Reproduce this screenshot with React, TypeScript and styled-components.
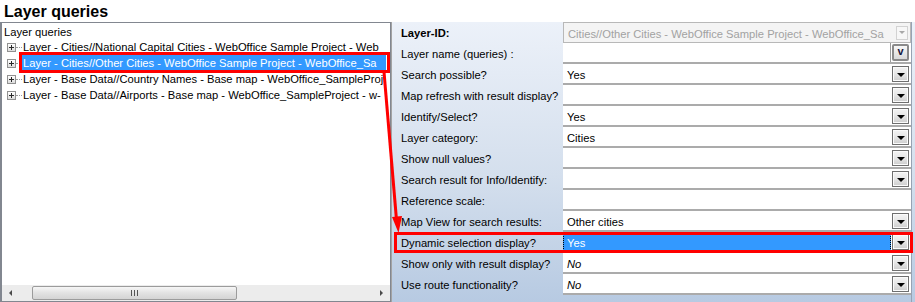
import React from 'react';
import styled, { createGlobalStyle, css } from 'styled-components';

const Global = createGlobalStyle`
  html, body { margin: 0; padding: 0; background: #fff; }
  body { font-family: "Liberation Sans", Arial, sans-serif; }
`;

const Frame = styled.div`
  position: relative;
  width: 915px;
  height: 302px;
  overflow: hidden;
  background: #fff;
  display: flex;
  flex-direction: column;
  font-family: "Liberation Sans", Arial, sans-serif;
  font-size: 11.2px;
  color: #000;
`;

const Title = styled.h1`
  margin: 0;
  height: 22px;
  flex: none;
  padding: 1px 0 0 4px;
  box-sizing: border-box;
  font-size: 16px;
  font-weight: bold;
  line-height: 21px;
`;

const Body = styled.div`
  flex: 1;
  display: flex;
  min-height: 0;
`;

const LeftPanel = styled.div`
  width: 391px;
  flex: none;
  box-sizing: border-box;
  border: 1px solid #828790;
  border-left-width: 2px;
  display: flex;
  flex-direction: column;
  background: #fff;
`;

const Tree = styled.div`
  flex: 1;
  overflow: hidden;
`;

const TreeRoot = styled.div`
  height: 16px;
  line-height: 16px;
  padding: 1px 0 0 2px;
  box-sizing: border-box;
  white-space: nowrap;
`;

const TreeRow = styled.div<{ $hl?: boolean }>`
  position: relative;
  height: 16px;
  display: flex;
  align-items: center;
  padding-left: 5px;
  ${p => p.$hl && css`
    &::after {
      content: '';
      position: absolute;
      left: 17px;
      right: 0;
      top: -3px;
      bottom: -2px;
      border: 3px solid #ff0000;
      pointer-events: none;
    }
  `}
`;

const Expander = styled.span`
  position: relative;
  flex: none;
  width: 9px;
  height: 9px;
  box-sizing: border-box;
  border: 1px solid #919191;
  background: linear-gradient(#ffffff, #dcdcdc);
  &::before {
    content: '';
    position: absolute;
    left: 1px;
    right: 1px;
    top: 3px;
    height: 1px;
    background: #2a2a2a;
  }
  &::after {
    content: '';
    position: absolute;
    top: 1px;
    bottom: 1px;
    left: 3px;
    width: 1px;
    background: #2a2a2a;
  }
`;

const Connector = styled.span`
  flex: none;
  width: 6px;
  height: 0;
  border-top: 1px dotted #9a9a9a;
`;

const TreeLabel = styled.span<{ $sel?: boolean }>`
  flex: 1;
  min-width: 0;
  margin-right: 4px;
  height: 16px;
  padding-left: 1px;
  line-height: 16px;
  white-space: nowrap;
  overflow: hidden;
  ${p => p.$sel && css`
    background: #3399ff;
    color: #fff;
  `}
`;

const HScroll = styled.div`
  height: 16px;
  flex: none;
  display: flex;
  align-items: center;
  background: #ececec;
`;

const ScrollArrow = styled.span<{ $dir: 'left' | 'right' }>`
  width: 17px;
  height: 16px;
  flex: none;
  display: flex;
  align-items: center;
  justify-content: center;
  &::before {
    content: '';
    width: 0;
    height: 0;
    border-top: 3px solid transparent;
    border-bottom: 3px solid transparent;
    ${p => p.$dir === 'left'
      ? css`border-right: 3px solid #4a4a4a;`
      : css`border-left: 3px solid #4a4a4a;`}
  }
`;

const Track = styled.div`
  flex: 1;
  height: 16px;
  display: flex;
  align-items: center;
`;

const Thumb = styled.div`
  margin-left: 13px;
  width: 205px;
  height: 14px;
  box-sizing: border-box;
  border: 1px solid #9b9b9b;
  border-radius: 2px;
  background: linear-gradient(#f6f6f6, #e2e2e2 50%, #d4d4d4);
  display: flex;
  align-items: center;
  justify-content: center;
`;

const Grip = styled.span`
  width: 7px;
  height: 6px;
  background: repeating-linear-gradient(90deg, #555 0 1px, transparent 1px 3px);
`;

const RightPanel = styled.div`
  flex: 1;
  box-sizing: border-box;
  border-left: 1px solid #a3a3a3;
  padding-right: 3px;
  background: linear-gradient(#ecf1f9, #d4dfed 55%, #b7cae2);
  display: flex;
`;

const PropGrid = styled.div`
  flex: 1;
  border-right: 1px solid #97a3b3;
  display: flex;
  flex-direction: column;
`;

const PropRow = styled.div<{ $hl?: boolean }>`
  position: relative;
  display: grid;
  grid-template-columns: 171px 1fr;
  height: 21px;
  flex: none;
  ${p => p.$hl && css`
    &::after {
      content: '';
      position: absolute;
      left: 2px;
      right: -2px;
      top: 0;
      bottom: 0;
      border: 3px solid #ff0000;
      pointer-events: none;
    }
  `}
`;

const PropLabel = styled.div<{ $bold?: boolean }>`
  padding: 3px 0 0 9px;
  line-height: 17px;
  white-space: nowrap;
  font-weight: ${p => (p.$bold ? 'bold' : 'normal')};
`;

const Field = styled.div<{ $disabled?: boolean }>`
  display: flex;
  align-items: center;
  box-sizing: border-box;
  height: 21px;
  background: #fff;
  border-bottom: 2px solid #ababab;
  ${p => p.$disabled && css`
    background: #f4f4f4;
    border: 1px solid #b8b8b8;
    color: #a2a2a2;
  `}
`;

const FieldText = styled.div<{ $sel?: boolean; $italic?: boolean; $boxed?: boolean }>`
  flex: 1;
  min-width: 0;
  align-self: stretch;
  box-sizing: border-box;
  padding: 3px 0 0 4px;
  line-height: 16px;
  white-space: nowrap;
  overflow: hidden;
  font-style: ${p => (p.$italic ? 'italic' : 'normal')};
  ${p => p.$sel && css`
    background: #3399ff;
    color: #fff;
    outline: 1px dotted #000;
    outline-offset: -1px;
  `}
  ${p => p.$boxed && css`
    border-right: 1px solid #9c9c9c;
  `}
`;

const DropButton = styled.span`
  flex: none;
  width: 17px;
  height: 16px;
  margin: 0 2px 0 1px;
  box-sizing: border-box;
  border: 1px solid #6f6f6f;
  box-shadow: inset 0 0 0 1px #fbfbfb;
  background: linear-gradient(#f4f4f4, #e6e6e6 50%, #cdcdcd);
  display: flex;
  align-items: center;
  justify-content: center;
  &::before {
    content: '';
    margin-top: 2px;
    width: 0;
    height: 0;
    border-top: 4px solid #000;
    border-left: 4px solid transparent;
    border-right: 4px solid transparent;
  }
`;

const DisabledButton = styled.span`
  flex: none;
  width: 12px;
  height: 14px;
  margin: 0 2px 0 2px;
  box-sizing: border-box;
  border: 1px solid #d2d2d2;
  background: #f7f7f7;
  display: flex;
  align-items: center;
  justify-content: center;
  &::before {
    content: '';
    width: 0;
    height: 0;
    border-top: 3px solid #a8a8a8;
    border-left: 3px solid transparent;
    border-right: 3px solid transparent;
  }
`;

const EllipsisButton = styled.span`
  flex: none;
  width: 17px;
  height: 17px;
  margin: 0 2px 0 1px;
  box-sizing: border-box;
  border: 2px solid #8a8a8a;
  border-radius: 2px;
  background: linear-gradient(#f7f7f7, #d9d9d9);
  display: flex;
  align-items: center;
  justify-content: center;
  font-weight: bold;
  font-size: 11px;
  line-height: 11px;
  color: #14143c;
  padding-bottom: 2px;
`;

const ArrowLayer = styled.svg`
  position: absolute;
  left: 0;
  top: 0;
  pointer-events: none;
`;

type Btn = 'drop' | 'none' | 'dots' | 'disabled';
interface Prop {
  label: string;
  value: string;
  btn: Btn;
  bold?: boolean;
  italic?: boolean;
  sel?: boolean;
  hl?: boolean;
  disabled?: boolean;
}

const props: Prop[] = [
  { label: 'Layer-ID:', value: 'Cities//Other Cities - WebOffice Sample Project - WebOffice_Sa', btn: 'disabled', bold: true, disabled: true },
  { label: 'Layer name (queries) :', value: '', btn: 'dots' },
  { label: 'Search possible?', value: 'Yes', btn: 'drop' },
  { label: 'Map refresh with result display?', value: '', btn: 'drop' },
  { label: 'Identify/Select?', value: 'Yes', btn: 'drop' },
  { label: 'Layer category:', value: 'Cities', btn: 'drop' },
  { label: 'Show null values?', value: '', btn: 'drop' },
  { label: 'Search result for Info/Identify:', value: '', btn: 'drop' },
  { label: 'Reference scale:', value: '', btn: 'none' },
  { label: 'Map View for search results:', value: 'Other cities', btn: 'drop' },
  { label: 'Dynamic selection display?', value: 'Yes', btn: 'drop', sel: true, hl: true },
  { label: 'Show only with result display?', value: 'No', btn: 'drop', italic: true },
  { label: 'Use route functionality?', value: 'No', btn: 'drop', italic: true },
];

const treeItems = [
  'Layer - Cities//National Capital Cities - WebOffice Sample Project - Web',
  'Layer - Cities//Other Cities - WebOffice Sample Project - WebOffice_Sa',
  'Layer - Base Data//Country Names - Base map - WebOffice_SampleProj',
  'Layer - Base Data//Airports - Base map - WebOffice_SampleProject - w-',
];

export default function App() {
  return (
    <>
      <Global />
      <Frame>
        <Title>Layer queries</Title>
        <Body>
          <LeftPanel>
            <Tree>
              <TreeRoot>Layer queries</TreeRoot>
              {treeItems.map((t, i) => (
                <TreeRow key={t} $hl={i === 1}>
                  <Expander />
                  <Connector />
                  <TreeLabel $sel={i === 1}>{t}</TreeLabel>
                </TreeRow>
              ))}
            </Tree>
            <HScroll>
              <ScrollArrow $dir="left" />
              <Track>
                <Thumb>
                  <Grip />
                </Thumb>
              </Track>
              <ScrollArrow $dir="right" />
            </HScroll>
          </LeftPanel>
          <RightPanel>
            <PropGrid>
              {props.map(p => (
                <PropRow key={p.label} $hl={p.hl}>
                  <PropLabel $bold={p.bold}>{p.label}</PropLabel>
                  <Field $disabled={p.disabled}>
                    <FieldText $sel={p.sel} $italic={p.italic} $boxed={p.btn === 'dots'}>
                      {p.value}
                    </FieldText>
                    {p.btn === 'drop' && <DropButton />}
                    {p.btn === 'disabled' && <DisabledButton />}
                    {p.btn === 'dots' && <EllipsisButton>v</EllipsisButton>}
                  </Field>
                </PropRow>
              ))}
            </PropGrid>
          </RightPanel>
        </Body>
        <ArrowLayer width={915} height={302} viewBox="0 0 915 302">
          <line x1={384} y1={72} x2={396.5} y2={220} stroke="#ff0000" strokeWidth={3} />
          <polygon points="392,217 402,216 398.5,233" fill="#ff0000" />
        </ArrowLayer>
      </Frame>
    </>
  );
}
